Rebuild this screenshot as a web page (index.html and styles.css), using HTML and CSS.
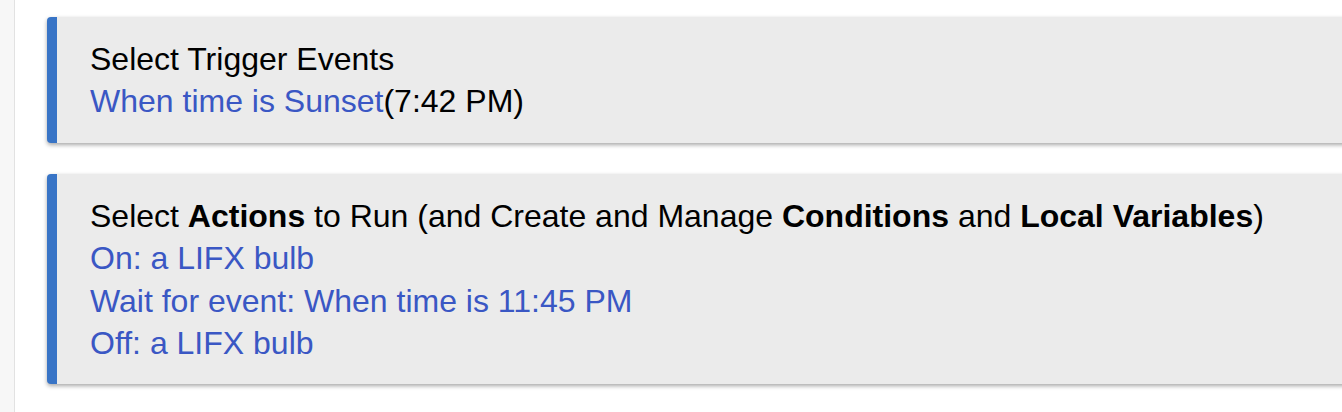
FILE: index.html
```html
<!DOCTYPE html>
<html>
<head>
<meta charset="utf-8">
<link rel="stylesheet" href="styles.css">
</head>
<body>
<div class="page">
  <div class="rail"></div>
  <main class="main">
    <section class="card">
      <div class="line">Select Trigger Events</div>
      <div class="line"><a class="link">When time is Sunset</a>(7:42 PM)</div>
    </section>
    <section class="card">
      <div class="line">Select <b>Actions</b> to Run (and Create and Manage <b>Conditions</b> and <b>Local Variables</b>)</div>
      <div class="line"><a class="link">On: a LIFX bulb</a></div>
      <div class="line"><a class="link">Wait for event: When time is 11:45 PM</a></div>
      <div class="line"><a class="link">Off: a LIFX bulb</a></div>
    </section>
  </main>
</div>
</body>
</html>
```
FILE: styles.css
```css
html, body {
  margin: 0;
  padding: 0;
  background: #ffffff;
  overflow: hidden;
}
.page {
  display: flex;
  width: 1342px;
  height: 412px;
  overflow: hidden;
  font-family: "Liberation Sans", Arial, sans-serif;
  font-size: 32px;
  color: #000;
}
.rail {
  flex: 0 0 14px;
  background: #f7f7f7;
  border-right: 1px solid #e2e2e2;
}
.main {
  flex: 0 0 1400px;
  padding: 17px 0 0 32px;
  display: flex;
  flex-direction: column;
  gap: 31px;
}
.card {
  background: #ebebeb;
  border-left: 10px solid #3874c6;
  border-radius: 4px;
  box-shadow: 0 2px 4px rgba(0, 0, 0, 0.35);
  padding: 21px 0 20px 33px;
}
.line {
  line-height: 42.4px;
  white-space: nowrap;
}
.link {
  color: #3a57c4;
  text-decoration: none;
}
b {
  font-weight: bold;
}
```
